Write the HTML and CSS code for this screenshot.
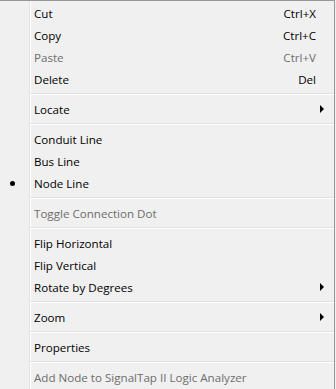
FILE: index.html
```html
<!DOCTYPE html>
<html lang="en">
<head>
    <meta charset="UTF-8">
    <title>Context menu</title>
    <link rel="stylesheet" href="styles.css">
</head>
<body>
    <div class="menu">
        <div class="item"><span class="label">Cut</span><span class="key">Ctrl+X</span></div>
        <div class="item"><span class="label">Copy</span><span class="key">Ctrl+C</span></div>
        <div class="item disabled"><span class="label">Paste</span><span class="key">Ctrl+V</span></div>
        <div class="item"><span class="label">Delete</span><span class="key">Del</span></div>
        <div class="sep"></div>
        <div class="item sub"><span class="label">Locate</span><span class="arrow"></span></div>
        <div class="sep"></div>
        <div class="item"><span class="label">Conduit Line</span></div>
        <div class="item"><span class="label">Bus Line</span></div>
        <div class="item checked"><span class="label">Node Line</span></div>
        <div class="sep"></div>
        <div class="item disabled"><span class="label">Toggle Connection Dot</span></div>
        <div class="sep"></div>
        <div class="item"><span class="label">Flip Horizontal</span></div>
        <div class="item"><span class="label">Flip Vertical</span></div>
        <div class="item sub"><span class="label">Rotate by Degrees</span><span class="arrow"></span></div>
        <div class="sep"></div>
        <div class="item sub"><span class="label">Zoom</span><span class="arrow"></span></div>
        <div class="sep"></div>
        <div class="item"><span class="label">Properties</span></div>
        <div class="sep"></div>
        <div class="item disabled"><span class="label">Add Node to SignalTap II Logic Analyzer</span></div>
    </div>
</body>
</html>
```

FILE: styles.css
```css
body {
    margin: 0;
    background: #f0f0f0;
    font-family: 'Open Sans', 'Noto Sans', sans-serif;
    font-size: 11.6px;
    color: #000;
}

.menu {
    width: 335px;
    height: 389px;
    border-top: 1px solid #979797;
    border-right: 1px solid #979797;
    padding-top: 1px;
    box-sizing: border-box;
    overflow: hidden;
    /* gutter line: dark then light */
    background:
        linear-gradient(to right, transparent 29px, #e2e3e3 29px, #e2e3e3 30px, #fff 30px, #fff 31px, transparent 31px),
        #f0f0f0;
}

.item {
    position: relative;
    display: flex;
    align-items: center;
    height: 22px;
    padding-left: 34px;
    padding-right: 20px;
}

.label {
    flex: 1;
}

.key {
    margin-right: -2px;
    text-align: right;
}

.disabled {
    color: #6d6d6d;
}

.checked::before {
    content: '';
    position: absolute;
    left: 10px;
    top: 9px;
    width: 5px;
    height: 5px;
    border-radius: 50%;
    background: #000;
}

.arrow {
    width: 0;
    height: 0;
    margin-right: -10px;
    border-top: 4px solid transparent;
    border-bottom: 4px solid transparent;
    border-left: 4px solid #000;
}

.sep {
    height: 8px;
    margin-left: 30px;
    background:
        linear-gradient(to bottom, transparent 3px, #e0e0e0 3px, #e0e0e0 4px, #fff 4px, #fff 5px, transparent 5px);
}
```
